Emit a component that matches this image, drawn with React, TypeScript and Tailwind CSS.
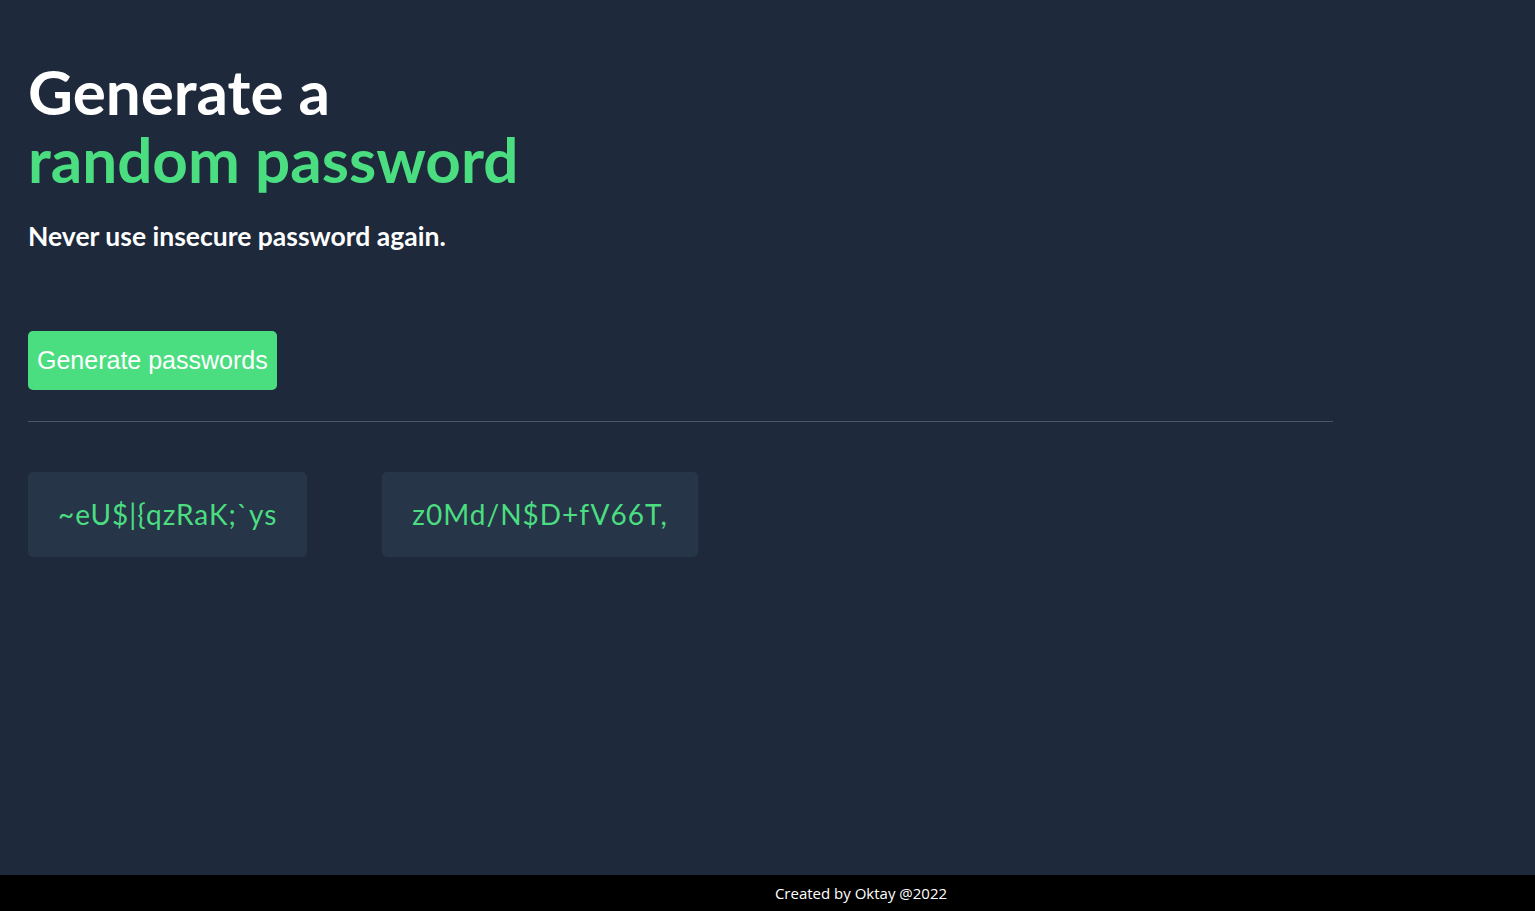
const passwords = ["~eU$|{qzRaK;`ys", "z0Md/N$D+fV66T,"];

const App = () => {
  return (
    <div className="min-h-screen flex flex-col bg-[#1e293b] font-['Lato','Open_Sans',sans-serif]">
      <main className="flex-1 px-[28px] pt-[57px]">
        <h1 className="text-[62px] leading-[68px] font-bold text-white">
          Generate a
          <br />
          <span className="text-[#4ade80]">random password</span>
        </h1>
        <p className="mt-[24px] text-[26.5px] font-bold text-white">
          Never use insecure password again.
        </p>
        <button className="mt-[74px] h-[59px] px-[9px] rounded-[5px] bg-[#4ade80] text-white text-[25px] font-['Liberation_Sans',Arial,sans-serif]">
          Generate passwords
        </button>
        <hr className="mt-[31px] w-[1305px] border-t border-[#4b5563]" />
        <div className="mt-[50px] flex gap-[75px]">
          {passwords.map((pw, index) => (
            <div
              key={index}
              className="h-[85px] px-[30px] flex items-center rounded-[5px] bg-[#273549] text-[#4ade80] text-[28px] tracking-[1px]"
            >
              {pw}
            </div>
          ))}
        </div>
      </main>
      <footer className="h-[36px] bg-black flex items-center justify-center pl-[187px] text-white text-[15px] font-['Open_Sans',sans-serif]">
        Created by Oktay @2022
      </footer>
    </div>
  );
};

export default App;
